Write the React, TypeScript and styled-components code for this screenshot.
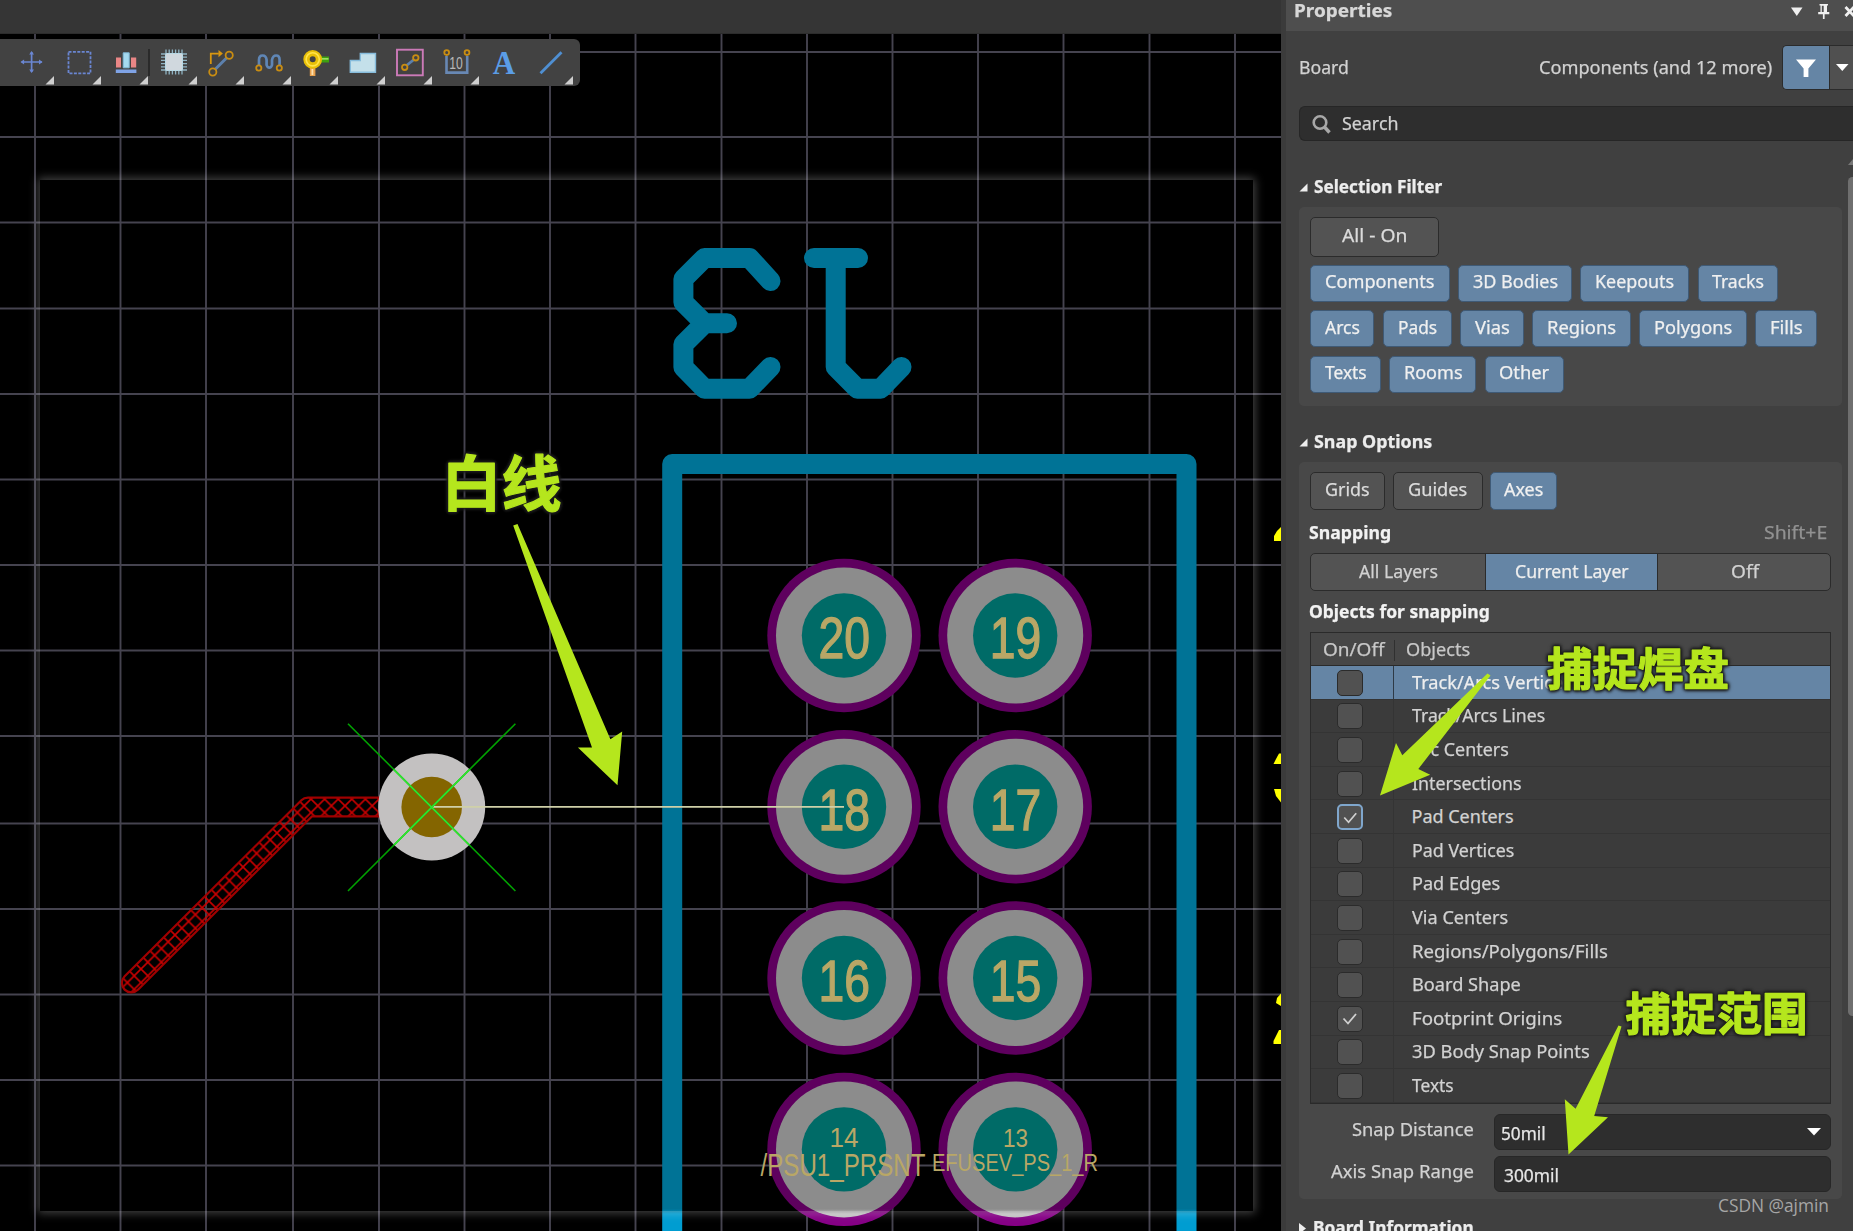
import React, { useLayoutEffect, useRef, useState } from "react";
import styled, { createGlobalStyle, css } from "styled-components";

const GlobalStyle = createGlobalStyle`
  * { box-sizing: border-box; }
  html, body { margin: 0; background: #404040; overflow: hidden; }
  body { font-family: "Noto Sans", "Open Sans", sans-serif; font-size: 18px; color: #d2d2d2; }
`;

const LIME = "#b5e61d";
const BLUE = "#6585a5";
const EDGE = "#2b2b2b";

/* ---------- text fitted to a column width ---------- */

const FitBox = styled.span<{ $w: number }>`
  display: inline-block;
  flex: none;
  width: ${(p) => p.$w}px;
  height: 26px;
  padding-bottom: 2px;
  line-height: 24px;
  text-align: left;
  white-space: nowrap;
  -webkit-text-stroke: 0.25px currentColor;
`;
const FitInner = styled.span`
  display: inline-block;
  transform-origin: 0 50%;
`;

function Fit({ w, children }: { w: number; children: React.ReactNode }) {
  const ref = useRef<HTMLSpanElement>(null);
  const [scale, setScale] = useState(1);
  useLayoutEffect(() => {
    if (ref.current) setScale(w / (ref.current.offsetWidth - 0.5));
  }, [w]);
  return (
    <FitBox $w={w}>
      <FitInner ref={ref} style={{ transform: `scaleX(${scale})` }}>
        {children}
      </FitInner>
    </FitBox>
  );
}

/* ---------- shell ---------- */

const Shell = styled.div`
  position: relative;
  display: grid;
  grid-template-columns: 1281px 572px;
  width: 1853px;
  height: 1231px;
  overflow: hidden;
`;
const Editor = styled.main`
  display: flex;
  flex-direction: column;
  min-width: 0;
  overflow: hidden;
  background: #000;
`;
const DocumentBar = styled.div`
  flex: none;
  height: 34px;
  background: #353535;
  border-bottom: 1px solid #2c2c2c;
`;
const Workspace = styled.div`
  position: relative;
  flex: 1;
  overflow: hidden;
`;
const Drawing = styled.svg`
  display: block;
`;
const Lens = styled.div`
  position: absolute;
  left: 40px;
  top: 146px;
  width: 1213px;
  height: 1031px;
  box-shadow: 0 0 9px 2px rgba(255, 255, 255, 0.27);
`;

/* ---------- toolbar ---------- */

const Toolbar = styled.div`
  position: absolute;
  left: 0;
  top: 5px;
  display: flex;
  width: 580px;
  height: 47px;
  padding-left: 7px;
  background: #424242;
  border-radius: 0 6px 6px 0;
`;
const ToolButton = styled.button`
  flex: none;
  width: 47px;
  height: 47px;
  padding: 0;
  border: 0;
  background: none;
`;
const Divider = styled.span`
  width: 2px;
  height: 27px;
  margin-top: 10px;
  background: #2a2a2a;
`;

const Node = ({ x, y, r = 3.2 }: { x: number; y: number; r?: number }) => (
  <circle cx={x} cy={y} r={r} fill="none" stroke="#c98d12" strokeWidth={1.8} />
);

const tools: { x: number; menu: boolean; art: React.ReactNode }[] = [
  {
    x: 7, menu: true,
    art: (
      <g stroke="#6a86d2" strokeWidth="1.7" fill="#6a86d2">
        <path d="M21.5 62H42M31.6 52V72" />
        <path stroke="none" d="M20.5 62l3.6-2.4v4.8zM42.6 62l-3.6-2.4v4.8zM31.6 51l-2.4 3.6h4.8zM31.6 73l-2.4-3.6h4.8z" />
      </g>
    ),
  },
  {
    x: 54, menu: true,
    art: <rect x="68.5" y="51.8" width="22" height="21.6" fill="none" stroke="#6a86d2" strokeWidth="1.8" strokeDasharray="3 1.4" />,
  },
  {
    x: 101, menu: true,
    art: (
      <>
        <path fill="#e98686" d="M116 57.5h5v10h-5zM131 57.5h5.2v10H131z" />
        <path fill="#a5daf0" stroke="#7fb8d8" d="M123.2 52.8h6v15h-6z" />
        <path fill="#7fa3e6" d="M115.8 69.5h20.6v3.4h-20.6z" />
      </>
    ),
  },
  {
    x: 150, menu: true,
    art: (
      <>
        <path stroke="#90b4c4" strokeWidth="1.3" d="M166 49.5v25M169.2 49.5v25M172.4 49.5v25M175.6 49.5v25M178.8 49.5v25M182 49.5v25M161 54h26M161 57.2h26M161 60.4h26M161 63.6h26M161 66.8h26M161 70h26" />
        <rect x="165.5" y="53.5" width="17" height="17" rx="1" fill="#d0d8de" stroke="#b8d8e4" />
      </>
    ),
  },
  {
    x: 197, menu: true,
    art: (
      <>
        <path d="M210.8 64V53.6h8" fill="none" stroke="#d8960f" strokeWidth="1.8" />
        <path d="M218.5 50l4.4 3.6-4.4 3.6z" fill="#d8960f" />
        <path d="M215 69.5l12-12" stroke="#5c80ad" strokeWidth="3" />
        <Node x={229.2} y={55.3} r={3.6} />
        <Node x={212.8} y={72} r={3.6} />
      </>
    ),
  },
  {
    x: 244, menu: true,
    art: (
      <>
        <path d="M259 65v-5c0-6 7-6 7.6 0v5c1 3.5 4.5 3.5 5.4 0v-5c1-6 7.6-6 7.6 0v5" fill="none" stroke="#5f86b5" strokeWidth="2.7" />
        <Node x={258.8} y={68} r={2.6} />
        <Node x={279.3} y={68} r={2.6} />
      </>
    ),
  },
  {
    x: 291, menu: true,
    art: (
      <>
        <path fill="#e8a04c" d="M309.8 67h5.6v9h-5.6z" />
        <path fill="#fbe0b0" d="M311.5 69h1.8v6h-1.8z" />
        <path fill="#3fa010" d="M320 56.5h9v6h-9z" />
        <path fill="#9ade60" d="M322 58h6.5v1.7H322z" />
        <circle cx="312.7" cy="59.3" r="6.2" fill="none" stroke="#e8bf08" strokeWidth="6.4" />
        <circle cx="312.7" cy="59.3" r="6.6" fill="none" stroke="#ffe34a" strokeWidth="1.6" />
      </>
    ),
  },
  {
    x: 338, menu: true,
    art: <path d="M350.3 60.5h10v-7h15.2v18.8h-25.2z" fill="#c4e0ea" stroke="#86bcdc" strokeWidth="1.4" />,
  },
  {
    x: 385, menu: true,
    art: (
      <>
        <rect x="397" y="49.7" width="25.8" height="25.6" fill="none" stroke="#cc7ab8" strokeWidth="1.9" />
        <path d="M406.5 65.5l7.5-6" stroke="#5c80ad" strokeWidth="2.8" />
        <Node x={404.7} y={67.3} r={2.7} />
        <Node x={415.8} y={57.8} r={2.7} />
      </>
    ),
  },
  {
    x: 432, menu: true,
    art: (
      <>
        <path d="M446.5 56v16.6h20.7V56" fill="none" stroke="#6888b4" strokeWidth="2.6" />
        <Node x={446.7} y={52.6} r={2.4} />
        <Node x={467} y={52.6} r={2.4} />
        <text x="449.3" y="68.8" fontFamily="Liberation Sans" fontSize="16" textLength="13.5" lengthAdjust="spacingAndGlyphs" fill="#b8b8b8">10</text>
      </>
    ),
  },
  {
    x: 479, menu: false,
    art: <text x="492.8" y="74" fontFamily="Liberation Serif" fontWeight="700" fontSize="33" textLength="22.5" lengthAdjust="spacingAndGlyphs" fill="#5b9de6">A</text>,
  },
  { x: 526, menu: true, art: <path d="M540.5 73.3l21-21" stroke="#4f8fd2" strokeWidth="2.8" /> },
];

/* ---------- board drawing ---------- */

const gridX = [35, 120.5, 206, 293, 379, 464.5, 550, 635.5, 721.5, 807, 892.5, 978, 1063.5, 1149.5, 1235];
const gridY = [52, 137, 222.5, 308.5, 394, 479.5, 565, 650.5, 736, 823.5, 909, 994.5, 1080, 1165.5];
const pads = [
  { x: 844, y: 635.5, n: "20" },
  { x: 1015.2, y: 635.5, n: "19" },
  { x: 844, y: 806.8, n: "18" },
  { x: 1015.2, y: 806.8, n: "17" },
  { x: 844, y: 978, n: "16" },
  { x: 1015.2, y: 978, n: "15" },
  { x: 844, y: 1149.4, n: "" },
  { x: 1015.2, y: 1149.4, n: "" },
];
const digitGrid = { fontFamily: "Liberation Sans, Arial, sans-serif", lengthAdjust: "spacingAndGlyphs" as const, fill: "#b9a766" };
const TRACK = "M131.3 983L308 807H385";

function Board() {
  return (
    <Drawing width="1281" height="1197" viewBox="0 34 1281 1197">
      <defs>
        {[
          ["silk", "#007396", "#009dd1"],
          ["ring", "#5e005e", "#850085"],
          ["pad", "#8c8c8c", "#c2c2c2"],
        ].map(([id, a, b]) => (
          <linearGradient key={id} id={id} gradientUnits="userSpaceOnUse" x1="0" x2="0" y1="1209" y2="1214">
            <stop offset="0" stopColor={a} />
            <stop offset="1" stopColor={b} />
          </linearGradient>
        ))}
        <pattern id="hatch" patternUnits="userSpaceOnUse" x="324.6" y="799" width="13.6" height="13.6">
          <path d="M-1 -1L14.6 14.6M14.6 -1L-1 14.6" stroke="#c80000" strokeWidth="1.6" />
        </pattern>
        <mask id="trackRim" maskUnits="userSpaceOnUse" x="90" y="780" width="320" height="230">
          <path d={TRACK} fill="none" stroke="#fff" strokeWidth="21" strokeLinecap="round" strokeLinejoin="round" />
          <path d={TRACK} fill="none" stroke="#000" strokeWidth="16.6" strokeLinecap="round" strokeLinejoin="round" />
        </mask>
        <clipPath id="viaClip"><circle cx="431.7" cy="807" r="53.5" /></clipPath>
      </defs>

      <g stroke="#45434f" strokeWidth="1.9">
        {gridX.map((x) => <path key={x} d={`M${x} 34V1231`} />)}
        {gridY.map((y) => <path key={y} d={`M0 ${y}H1281`} />)}
      </g>

      <g fill="none" stroke="#007396" strokeWidth="20" strokeLinecap="round" strokeLinejoin="round">
        <path d="M770.5 281L749.5 258H704.5L683.4 279V302.3L704.5 323.3L683.4 344.3V367.3L704.5 388.7H749.5L770.5 367M704.5 323.3H727" />
        <path d="M814 258H858M835.7 258V367L857.3 388.7H880.7L901.5 367" />
      </g>
      <path d="M672.2 1245V464H1186.5V1245" fill="none" stroke="url(#silk)" strokeWidth="20" strokeLinejoin="round" />

      {pads.map((p) => (
        <g key={`${p.x}-${p.y}`}>
          <circle cx={p.x} cy={p.y} r="76.7" fill="url(#ring)" />
          <circle cx={p.x} cy={p.y} r="68" fill="url(#pad)" />
          <circle cx={p.x} cy={p.y} r="42.2" fill="#006b67" />
          {p.n && (
            <text {...digitGrid} x={p.x - 25.5} y={p.y + 22.9} fontSize="58" textLength="51.5" stroke="#b9a766" strokeWidth="1.3">{p.n}</text>
          )}
        </g>
      ))}
      <text {...digitGrid} x="829.5" y="1147" fontSize="28" textLength="29">14</text>
      <text {...digitGrid} x="1003" y="1147.3" fontSize="25.5" textLength="25">13</text>
      <text {...digitGrid} x="760.5" y="1176" fontSize="30.5" textLength="165">/PSU1_PRSNT</text>
      <text {...digitGrid} x="932" y="1171" fontSize="24.5" textLength="166">EFUSEV_PS_1_R</text>

      <path d={TRACK} fill="none" stroke="url(#hatch)" strokeWidth="19" strokeLinecap="round" strokeLinejoin="round" />
      <rect x="90" y="780" width="300" height="230" fill="#a00000" mask="url(#trackRim)" />

      <circle cx="431.7" cy="807" r="53.5" fill="#c3c1c1" />
      <circle cx="431.7" cy="807" r="30.3" fill="#846500" />
      <path d="M432 806.8H844" stroke="#cfd0a8" strokeWidth="1.8" />
      <path d="M348 723.7L515.4 891M515.4 723.7L348 891" stroke="#00a200" strokeWidth="1.6" />
      <path clipPath="url(#viaClip)" d="M348 723.7L515.4 891M515.4 723.7L348 891" stroke="#2fe42f" strokeWidth="1.7" />

      <g fill="#ff0">
        <path d="M1281 527L1277 531L1274 536V541H1281z" />
        <path d="M1281 753.5H1279L1276 759L1273.5 764H1281z" />
        <path d="M1281 789H1274L1276 796L1281 802.5z" />
        <path d="M1281 993.5L1277 998L1276 1003L1281 1006z" />
        <path d="M1281 1030H1279L1276 1036L1273.5 1041V1044H1281z" />
      </g>
    </Drawing>
  );
}

/* ---------- properties panel ---------- */

const Panel = styled.aside`
  display: flex;
  flex-direction: column;
  height: 1231px;
  border-left: 5px solid #3b3b3b;
  background: #404040;
  overflow: hidden;
`;
const PanelHeader = styled.header`
  flex: none;
  display: flex;
  justify-content: space-between;
  height: 31px;
  padding-left: 8px;
  background: #4e4e4e;
  font-weight: 700;
  color: #d8d8d8;
`;
const HeaderTitle = styled.div`
  margin-top: -2px;
`;
const ScopeRow = styled.div`
  flex: none;
  display: flex;
  align-items: center;
  height: 45px;
  margin-top: 14px;
  padding-left: 13px;
`;
const ScopeValue = styled.div`
  display: flex;
  align-items: center;
  gap: 11px;
  margin-left: auto;
`;
const FilterButton = styled.div`
  display: grid;
  grid-template-columns: 47px 26px;
  width: 71px;
  height: 45px;
  overflow: hidden;
  border: 1px solid ${EDGE};
  border-right: 0;
  border-radius: 5px 0 0 5px;
  background: #505050;
`;
const FilterMain = styled.span`
  display: flex;
  background: ${BLUE};
  border-right: 1px solid ${EDGE};
`;
const SearchBox = styled.div`
  flex: none;
  display: flex;
  align-items: center;
  gap: 11px;
  height: 35px;
  margin: 16px 0 0 13px;
  padding-left: 12px;
  border: 1px solid #262626;
  border-right: 0;
  border-radius: 6px 0 0 6px;
  background: #2e2e2e;
`;
const PanelBody = styled.div`
  display: grid;
  grid-template-columns: 543px 1fr;
  column-gap: 6px;
  flex: 1;
  padding: 18px 0 0 13px;
`;
const Sections = styled.div`
  display: flex;
  flex-direction: column;
`;
const SectionTitle = styled.h2<{ $top: number }>`
  display: flex;
  align-items: center;
  gap: 5.5px;
  height: 24px;
  margin: ${(p) => p.$top}px 0 0;
  font-size: 18px;
  font-weight: 700;
  color: #ececec;
`;
const Group = styled.section<{ $h: number }>`
  display: flex;
  flex-direction: column;
  height: ${(p) => p.$h}px;
  margin-top: 8px;
  padding: 10px 11px 0 11px;
  border-radius: 5px;
  background: #484848;
`;
const Row = styled.div<{ $top?: number }>`
  display: flex;
  margin-top: ${(p) => p.$top ?? 0}px;
`;
const active = css`
  color: #f0f0f0;
  background: ${BLUE};
  border-color: #3f5a76;
`;
const Chip = styled.button<{ $w: number; $on?: boolean; $h?: number; $gap?: number }>`
  display: flex;
  align-items: center;
  justify-content: center;
  width: ${(p) => p.$w}px;
  height: ${(p) => p.$h ?? 37}px;
  margin: 0 ${(p) => p.$gap ?? 8.5}px 0 0;
  padding: 0 0 2px;
  flex: none;
  border: 1.5px solid ${EDGE};
  border-radius: 5px;
  background: #535353;
  color: #dcdcdc;
  font: inherit;
  ${(p) => p.$on && active}
`;
const SubHead = styled.div<{ $top: number }>`
  display: flex;
  justify-content: space-between;
  height: 24px;
  margin: ${(p) => p.$top}px 0 0 -1px;
  font-weight: 700;
  color: #f2f2f2;
`;
const Shortcut = styled.span`
  margin-right: 4px;
  font-weight: 400;
  color: #929292;
`;
const Segments = styled.div`
  display: grid;
  grid-template-columns: 174px 172px 1fr;
  height: 38px;
  margin-top: 9px;
  border: 1.5px solid ${EDGE};
  border-radius: 5px;
  background: #535353;
  overflow: hidden;
`;
const Segment = styled.div<{ $on?: boolean }>`
  display: flex;
  align-items: center;
  justify-content: center;
  padding-bottom: 1px;
  border-left: 1px solid ${EDGE};
  ${(p) => p.$on && css`background: ${BLUE}; color: #eee;`}
  &:first-child { border-left: 0; }
`;
const Table = styled.div`
  height: 472px;
  margin-top: 9px;
  border: 1.5px solid #2a2a2a;
  background: #3b3b3b;
`;
const TableHead = styled.div`
  display: flex;
  align-items: center;
  height: 33px;
  background: #474747;
  border-bottom: 1px solid #2a2a2a;
  padding: 2px 0 0 12px;
  color: #c8c8c8;
`;
const HeadDivider = styled.span`
  width: 1px;
  height: 21px;
  margin: 0 11px 0 10px;
  background: #303030;
`;
const TableRow = styled.div<{ $on?: boolean }>`
  display: grid;
  grid-template-columns: 83px 1fr;
  height: 33.6px;
  border-bottom: 1px solid #343434;
  ${(p) => p.$on && css`background: ${BLUE}; color: #eee;`}
`;
const CheckCell = styled.span<{ $on?: boolean }>`
  display: flex;
  align-items: center;
  padding: 1px 0 0 26px;
  border-right: 1px solid ${(p) => (p.$on ? "#2e3a46" : "#343434")};
`;
const NameCell = styled.span`
  display: flex;
  align-items: center;
  padding: 1px 0 0 17.5px;
`;
const Check = styled.span<{ $focus?: boolean }>`
  display: flex;
  width: 26px;
  height: 26px;
  border: ${(p) => (p.$focus ? "2px solid #7fa6cc" : `1.5px solid ${EDGE}`)};
  border-radius: 5px;
  background: #515151;
`;
const FieldRow = styled.div<{ $top: number }>`
  display: flex;
  align-items: center;
  justify-content: flex-end;
  gap: 21px;
  height: 36px;
  margin-top: ${(p) => p.$top}px;
`;
const FieldLabel = styled.span`
  margin-top: -4px;
`;
const Field = styled.span<{ $pad: number }>`
  display: flex;
  align-items: center;
  justify-content: space-between;
  width: 337px;
  height: 36px;
  padding: 3px 9px 0 ${(p) => p.$pad}px;
  border: 1px solid #272727;
  border-radius: 6px;
  background: #2e2e2e;
  color: #e6e6e6;
`;
const DropMark = styled.svg`
  margin-top: -4px;
`;
const ScrollTrack = styled.div`
  display: flex;
  flex-direction: column;
  align-items: flex-start;
`;
const ScrollThumb = styled.div`
  width: 9px;
  height: 839px;
  margin-top: 12px;
  border-radius: 5px;
  background: #6f6f6f;
`;

const chipRows: [string, number, number][][] = [
  [["Components", 139.5, 109.3], ["3D Bodies", 113.5, 84.4], ["Keepouts", 109, 79], ["Tracks", 80, 51.3]],
  [["Arcs", 64, 34.6], ["Pads", 69, 39], ["Vias", 63.5, 34.2], ["Regions", 98.5, 68.8], ["Polygons", 107.5, 77.3], ["Fills", 62, 32.3]],
  [["Texts", 70.5, 41], ["Rooms", 87, 57.6], ["Other", 79, 49.4]],
];
const objects: [string, number, boolean][] = [
  ["Track/Arcs Vertices", 159, false],
  ["Track/Arcs Lines", 133, false],
  ["Arc Centers", 96, false],
  ["Intersections", 109.5, false],
  ["Pad Centers", 101.5, true],
  ["Pad Vertices", 101.5, false],
  ["Pad Edges", 88, false],
  ["Via Centers", 96, false],
  ["Regions/Polygons/Fills", 195, false],
  ["Board Shape", 108.5, false],
  ["Footprint Origins", 150, true],
  ["3D Body Snap Points", 177, false],
  ["Texts", 41, false],
];

const OpenMark = () => (
  <svg width="9" height="9" viewBox="0 0 9 9"><path d="M8.5 .5V8.5H.5z" fill="#eee" /></svg>
);

function Properties() {
  return (
    <Panel>
      <PanelHeader>
        <HeaderTitle><Fit w={97.5}>Properties</Fit></HeaderTitle>
        <svg width="64" height="31" viewBox="1789 0 64 31" fill="#f0f0f0">
          <path d="M1791 7.5h11.5l-5.7 8.5z" />
          <path d="M1819.5 4h8.5v1.6h-1V12h2.3v2.2h-4.7V19h-1.7v-4.8h-4.7V12h2.3V5.6h-1z" />
          <path d="M1821.8 5.8h1.9V12h-1.9z" fill="#4e4e4e" />
          <path d="M1845.5 7l8.5 9M1845.5 16l8.5-9" stroke="#f0f0f0" strokeWidth="2.8" />
        </svg>
      </PanelHeader>
      <ScopeRow>
        <Fit w={49.5}>Board</Fit>
        <ScopeValue>
          <Fit w={232.5}>Components (and 12 more)</Fit>
          <FilterButton>
            <FilterMain>
              <svg width="46" height="43" viewBox="0 0 46 43"><path d="M13 13.5h20l-7.6 9v8.5h-4.8v-8.5z" fill="#fff" /></svg>
            </FilterMain>
            <svg width="26" height="43" viewBox="0 0 26 43"><path d="M6 18h12.5l-6.2 7z" fill="#fff" /></svg>
          </FilterButton>
        </ScopeValue>
      </ScopeRow>
      <SearchBox>
        <svg width="19" height="20" viewBox="0 0 19 20" fill="none" stroke="#a8a8a8">
          <circle cx="8" cy="8.5" r="6.3" strokeWidth="2.6" />
          <path d="M12.5 13l5 5.5" strokeWidth="3.4" />
        </svg>
        <Fit w={56}>Search</Fit>
      </SearchBox>
      <PanelBody>
        <Sections>
          <SectionTitle $top={16}><OpenMark /><Fit w={127.5}>Selection Filter</Fit></SectionTitle>
          <Group $h={199}>
            <Row><Chip $w={129} $h={40}><Fit w={64.7}>All - On</Fit></Chip></Row>
            {chipRows.map((row, i) => (
              <Row key={i} $top={i === 0 ? 7.5 : 8.5}>
                {row.map(([name, w, tw]) => (
                  <Chip key={name} $w={w} $on><Fit w={tw}>{name}</Fit></Chip>
                ))}
              </Row>
            ))}
          </Group>
          <SectionTitle $top={24}><OpenMark /><Fit w={117.5}>Snap Options</Fit></SectionTitle>
          <Group $h={737}>
            <Row>
              <Chip $w={75} $h={38} $gap={7.5}><Fit w={44.2}>Grids</Fit></Chip>
              <Chip $w={90} $h={38} $gap={7.5}><Fit w={59}>Guides</Fit></Chip>
              <Chip $w={67} $h={38} $on><Fit w={38.3}>Axes</Fit></Chip>
            </Row>
            <SubHead $top={10}>
              <Fit w={82}>Snapping</Fit>
              <Shortcut><Fit w={63}>Shift+E</Fit></Shortcut>
            </SubHead>
            <Segments>
              <Segment><Fit w={78}>All Layers</Fit></Segment>
              <Segment $on><Fit w={113.4}>Current Layer</Fit></Segment>
              <Segment><Fit w={27}>Off</Fit></Segment>
            </Segments>
            <SubHead $top={8}><Fit w={180}>Objects for snapping</Fit></SubHead>
            <Table>
              <TableHead>
                <Fit w={60.6}>On/Off</Fit>
                <HeadDivider />
                <Fit w={64}>Objects</Fit>
              </TableHead>
              {objects.map(([name, w, on], i) => (
                <TableRow key={name} $on={i === 0}>
                  <CheckCell $on={i === 0}>
                    <Check $focus={name === "Pad Centers"}>
                      {on && (
                        <svg width="23" height="23" viewBox="0 0 23 23"><path d="M5.5 11.5l4.5 5 8-9.5" fill="none" stroke="#d0d0d0" strokeWidth="1.8" /></svg>
                      )}
                    </Check>
                  </CheckCell>
                  <NameCell><Fit w={w}>{name}</Fit></NameCell>
                </TableRow>
              ))}
            </Table>
            <FieldRow $top={10}>
              <FieldLabel><Fit w={121.5}>Snap Distance</Fit></FieldLabel>
              <Field $pad={6}>
                <Fit w={44.5}>50mil</Fit>
                <DropMark width="14" height="8" viewBox="0 0 14 8"><path d="M0 0h14L7 7.5z" fill="#fff" /></DropMark>
              </Field>
            </FieldRow>
            <FieldRow $top={6}>
              <FieldLabel><Fit w={142}>Axis Snap Range</Fit></FieldLabel>
              <Field $pad={9}><Fit w={54.5}>300mil</Fit></Field>
            </FieldRow>
          </Group>
          <SectionTitle $top={17}>
            <svg width="8" height="11" viewBox="0 0 8 11"><path d="M0 0l7 5.5-7 5.5z" fill="#eee" /></svg>
            <Fit w={160}>Board Information</Fit>
          </SectionTitle>
        </Sections>
        <ScrollTrack>
          <svg width="9" height="6" viewBox="0 0 9 6"><path d="M0 6l5-6 5 6z" fill="#777" /></svg>
          <ScrollThumb />
        </ScrollTrack>
      </PanelBody>
    </Panel>
  );
}

/* ---------- callouts over the whole window ---------- */

const Callouts = styled.svg`
  position: absolute;
  inset: 0;
  pointer-events: none;
`;
const CalloutText = styled.text`
  font-family: "Noto Sans CJK SC", sans-serif;
  font-weight: 700;
  fill: ${LIME};
  stroke: ${LIME};
  stroke-width: 1.2px;
  stroke-linejoin: round;
  filter: drop-shadow(0 0 1.5px #1c1c1c) drop-shadow(0 0 1.5px #1c1c1c) drop-shadow(0 0 1px #1c1c1c);
`;
const Credit = styled.text`
  font-family: "Open Sans", "Noto Sans", sans-serif;
  font-size: 18px;
  fill: #a6a6a6;
`;

export default function App() {
  return (
    <Shell>
      <GlobalStyle />
      <Editor>
        <DocumentBar />
        <Workspace>
          <Board />
          <Lens />
          <Toolbar>
            {tools.map((t) => (
              <React.Fragment key={t.x}>
                {t.x === 150 && <Divider />}
                <ToolButton>
                  <svg width="47" height="47" viewBox={`${t.x} 39 47 47`}>
                    {t.art}
                    {t.menu && <path d={`M${t.x + 47} 76v8.5h-8.5z`} fill="#cfcfcf" />}
                  </svg>
                </ToolButton>
              </React.Fragment>
            ))}
          </Toolbar>
        </Workspace>
      </Editor>
      <Properties />
      <Callouts width="1853" height="1231" viewBox="0 0 1853 1231">
        <g fill={LIME}>
          <path d="M513.2 525.5L517.5 524L610.4 739.3L622.2 731.5L617.5 785.3L577.9 747.6L592 747.4z" />
          <path d="M1487.5 673.5L1490.5 675.5L1418.3 769L1430.2 774.7L1380 795.5L1396 743L1402.3 755.3z" />
          <path d="M1618.5 1025.5L1621.5 1026.5L1594.2 1116L1608 1117.3L1568.5 1154.5L1564.8 1099.3L1575.6 1108.7z" />
        </g>
        <CalloutText x="441.5" y="505.5" fontSize="60">白线</CalloutText>
        <CalloutText x="1547" y="686" fontSize="45.5">捕捉焊盘</CalloutText>
        <CalloutText x="1625.5" y="1030.5" fontSize="45.5">捕捉范围</CalloutText>
        <Credit x="1718" y="1212" textLength="111" lengthAdjust="spacingAndGlyphs">CSDN @ajmin</Credit>
      </Callouts>
    </Shell>
  );
}
